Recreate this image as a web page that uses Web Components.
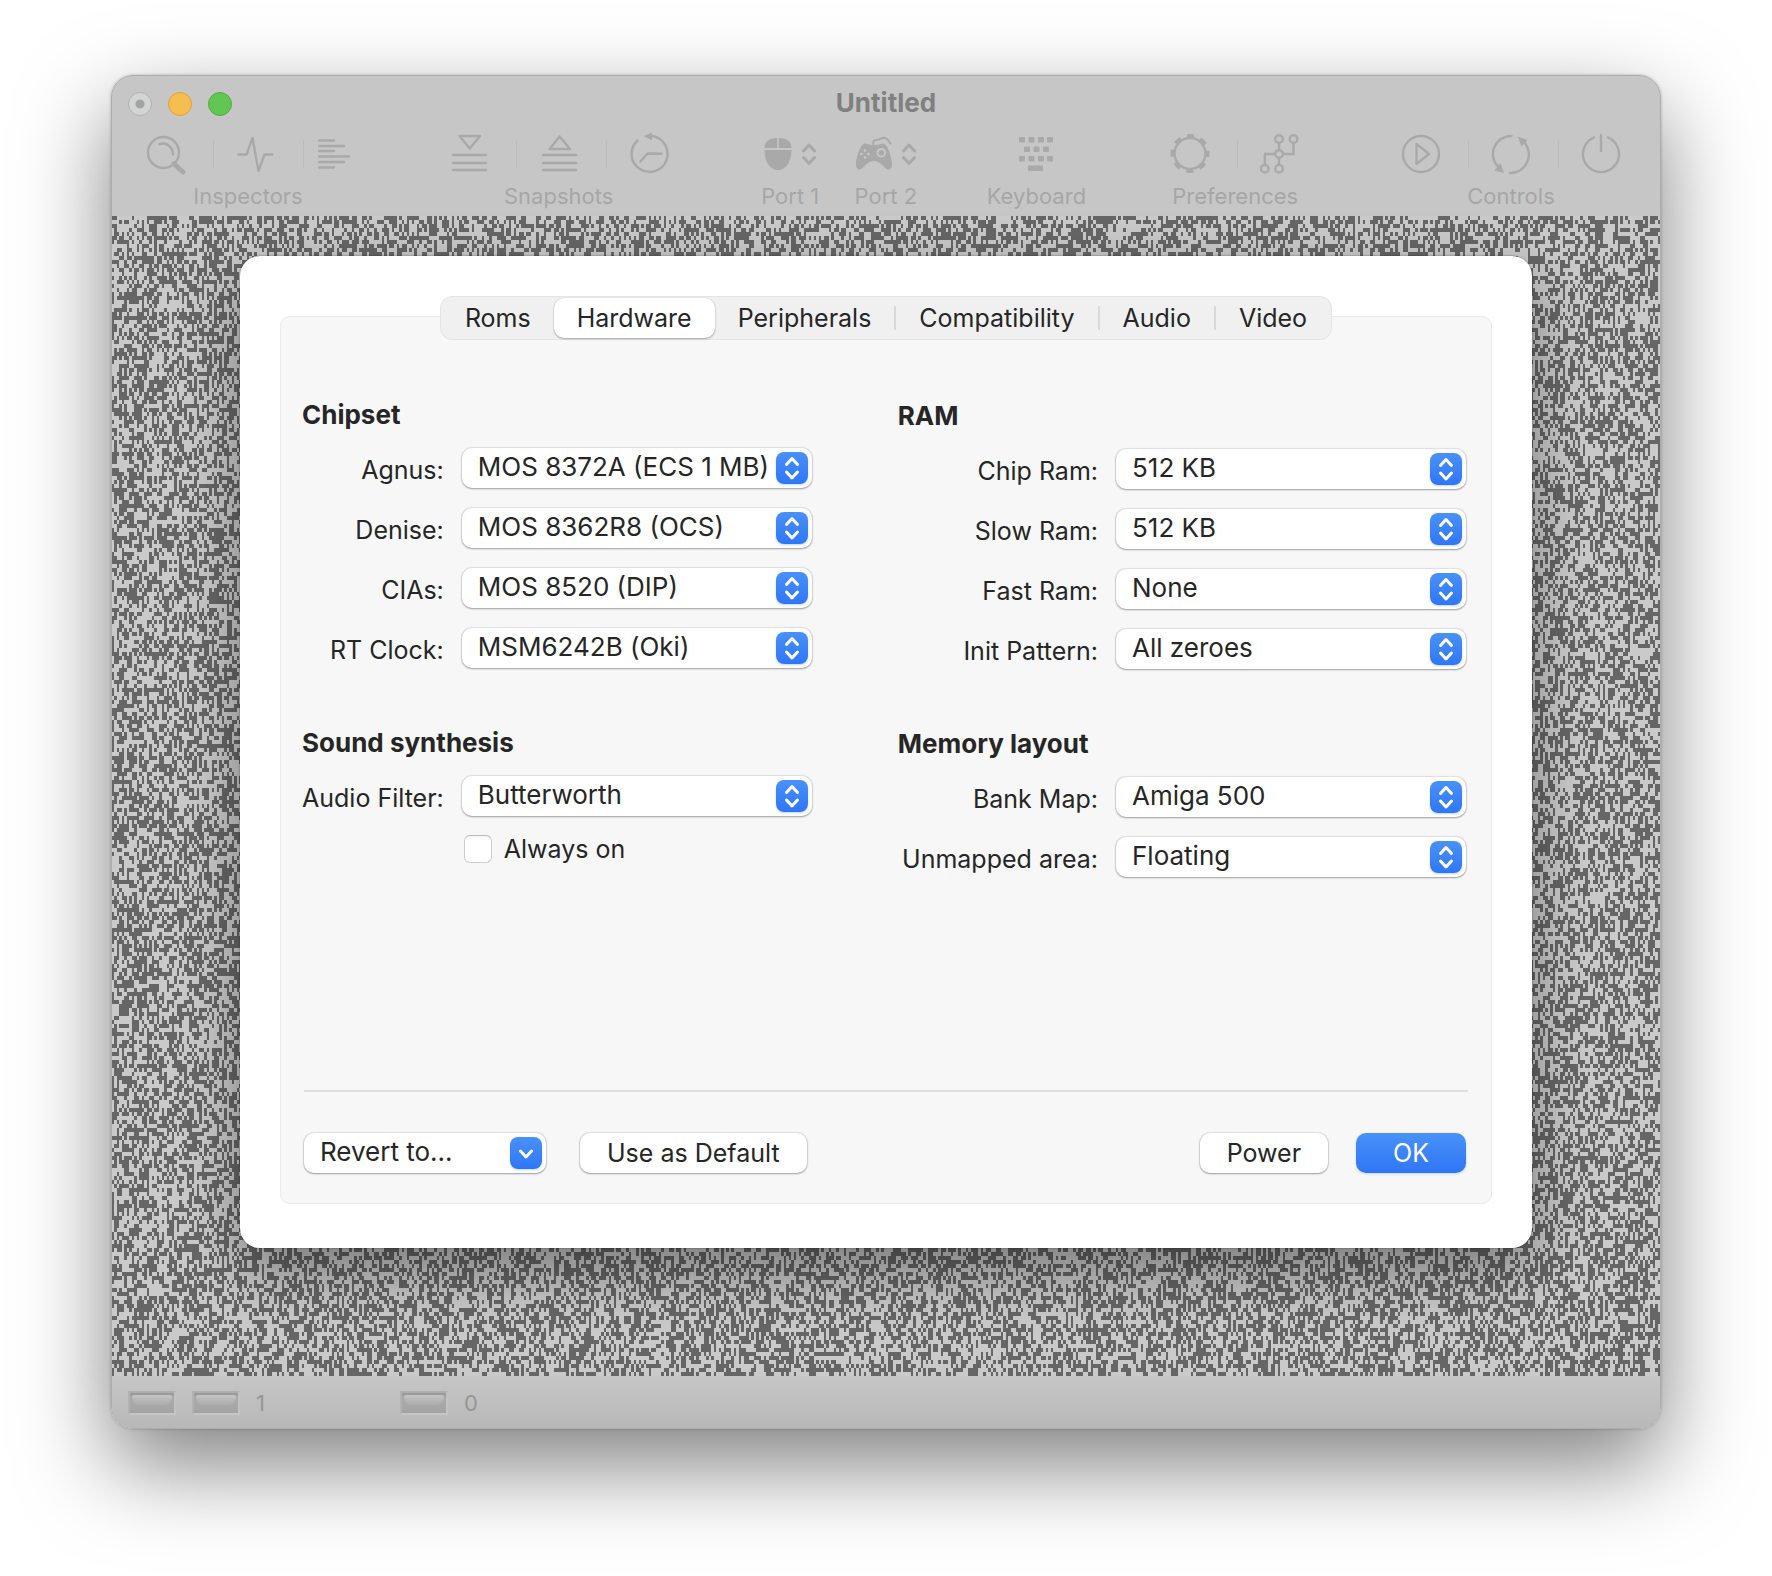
<!DOCTYPE html>
<html lang="en">
<head>
<meta charset="utf-8">
<title>Untitled</title>
<style>
  body { margin: 0; background: #fff; font-family: Inter, "Liberation Sans", sans-serif; font-size: 25px; line-height: 30px; color: #262626; }
</style>
</head>
<body>
<emulator-window heading="Untitled">
  <tool-group slot="tools" label="Inspectors">
    <tool-icon name="magnifier"></tool-icon><tool-divider></tool-divider>
    <tool-icon name="pulse"></tool-icon><tool-divider tight></tool-divider>
    <tool-icon name="list"></tool-icon>
  </tool-group>
  <tool-space slot="tools" style="flex-grow:95"></tool-space>
  <tool-group slot="tools" label="Snapshots">
    <tool-icon name="load"></tool-icon><tool-divider></tool-divider>
    <tool-icon name="save"></tool-icon><tool-divider></tool-divider>
    <tool-icon name="history"></tool-icon>
  </tool-group>
  <tool-space slot="tools" style="flex-grow:89"></tool-space>
  <tool-group slot="tools" label="Port 1" class="port">
    <tool-icon name="mouse"></tool-icon><tool-icon name="updown"></tool-icon>
  </tool-group>
  <tool-space slot="tools" style="flex-grow:34"></tool-space>
  <tool-group slot="tools" label="Port 2" class="port">
    <tool-icon name="gamepad"></tool-icon><tool-icon name="updown"></tool-icon>
  </tool-group>
  <tool-space slot="tools" style="flex-grow:67"></tool-space>
  <tool-group slot="tools" label="Keyboard">
    <tool-icon name="keyboard"></tool-icon>
  </tool-group>
  <tool-space slot="tools" style="flex-grow:81"></tool-space>
  <tool-group slot="tools" label="Preferences">
    <tool-icon name="gear"></tool-icon><tool-divider></tool-divider>
    <tool-icon name="network"></tool-icon>
  </tool-group>
  <tool-space slot="tools" style="flex-grow:97"></tool-space>
  <tool-group slot="tools" label="Controls">
    <tool-icon name="play"></tool-icon><tool-divider></tool-divider>
    <tool-icon name="cycle"></tool-icon><tool-divider></tool-divider>
    <tool-icon name="power"></tool-icon>
  </tool-group>

  <config-sheet>
    <tab-strip slot="tabs" tabs="Roms,Hardware,Peripherals,Compatibility,Audio,Video" selected="Hardware"></tab-strip>
    <form-section slot="left" heading="Chipset">
      <popup-row label="Agnus:" value="MOS 8372A (ECS 1 MB)"></popup-row>
      <popup-row label="Denise:" value="MOS 8362R8 (OCS)"></popup-row>
      <popup-row label="CIAs:" value="MOS 8520 (DIP)"></popup-row>
      <popup-row label="RT Clock:" value="MSM6242B (Oki)"></popup-row>
    </form-section>
    <form-section slot="left" heading="Sound synthesis">
      <popup-row label="Audio Filter:" value="Butterworth"></popup-row>
      <check-row label="Always on"></check-row>
    </form-section>
    <form-section slot="right" heading="RAM">
      <popup-row label="Chip Ram:" value="512 KB"></popup-row>
      <popup-row label="Slow Ram:" value="512 KB"></popup-row>
      <popup-row label="Fast Ram:" value="None"></popup-row>
      <popup-row label="Init Pattern:" value="All zeroes"></popup-row>
    </form-section>
    <form-section slot="right" heading="Memory layout">
      <popup-row label="Bank Map:" value="Amiga 500"></popup-row>
      <popup-row label="Unmapped area:" value="Floating"></popup-row>
    </form-section>
    <popup-button slot="actions" value="Revert to..." kind="down"></popup-button>
    <push-button slot="actions" class="default">Use as Default</push-button>
    <push-button slot="actions" class="power">Power</push-button>
    <push-button slot="actions" class="ok" primary>OK</push-button>
  </config-sheet>

  <drive-led slot="status"></drive-led>
  <drive-led slot="status" count="1"></drive-led>
  <drive-led slot="status" count="0"></drive-led>
</emulator-window>

<script>
const define = (name, html, init) => customElements.define(name, class extends HTMLElement {
  connectedCallback() {
    if (this.shadowRoot) return;
    const root = this.attachShadow({ mode: 'open' });
    root.innerHTML = typeof html === 'function' ? html(this) : html;
    if (init) init(root, this);
  }
});

/* Toolbar glyphs: [width, markup], all 44px tall */
const glyphs = {
  magnifier: [40, '<circle cx="17.5" cy="20.5" r="15.5"/><path d="M13.5 12C21 10 27 15 27 22.5"/><path d="M28 32L37 40" stroke-width="5"/><path d="M27 31L30 34"/>'],
  pulse: [40, '<path d="M2.500 22.500H10.500L16.500 6L22.500 39L28.500 22.500H36.500"/>'],
  list: [32, '<path d="M1 8.500H16M1 14H26M1 19H16M1 24.500H31M1 30H26M1 35.500H16"/>'],
  load: [40, '<path d="M10.500 4H31L20.700 16.500ZM4 23H37M4 31H37M4 38H37"/>'],
  save: [40, '<path d="M10.500 17H31L20.700 4.500ZM4 23H37M4 31H37M4 38H37"/>'],
  history: [40, '<path d="M23 4A18 18 0 1 1 8.500 8.500"/><path d="M11.500 29.500L18.500 21.500L32.500 21.800"/><path d="M14.500 4L23 0.500V8.500Z" fill="currentColor" stroke="none"/>'],
  mouse: [28, '<g fill="currentColor" stroke="none"><path d="M13.200 6V16H0.500C0.500 9 6 6 13.200 6ZM14.800 6V16H27.500C27.500 9 22 6 14.800 6ZM0.500 18H27.500C27.500 30 22 38 14 38S0.500 30 0.500 18Z"/></g>'],
  updown: [14, '<path d="M1.500 19L7 13L12.500 19M1.500 25.500L7 31.500L12.500 25.500" stroke-width="3"/>'],
  gamepad: [36, '<path d="M17.500 13C16.500 8.500 18 8.500 21 8C25 7.500 25 5.800 28 5.800C31 5.800 33 9 34.500 11.500" stroke-width="2"/><path fill="currentColor" stroke="none" d="M9 11.500C11 11.500 12 13 18 13S25 11.500 27 11.500C32 11.500 36 27 36 32C36 38 32 38.500 30 36.500C26 33 23 29 18 29S10 33 6 36.500C4 38.500 0 38 0 32C0 27 4 11.500 9 11.500Z"/><circle cx="25.300" cy="20.700" r="3.800" stroke="#c6c6c6" stroke-width="2"/><g fill="#c6c6c6" stroke="none"><circle cx="9" cy="18.500" r="1.300"/><circle cx="9" cy="25.500" r="1.300"/><circle cx="5.500" cy="22" r="1.300"/><circle cx="12.500" cy="22" r="1.300"/></g>'],
  keyboard: [34, '<g fill="currentColor" stroke="none">' +
    [[0,5],[9.500,5],[19,5],[28,5],[5,14.500],[14.500,14.500],[24,14.500],[0,24],[9.500,24],[19,24],[28,24]].map(p => `<rect x="${p[0]}" y="${p[1]}" width="6" height="5.500" rx="1"/>`).join('') +
    '<rect x="9" y="33.500" width="15" height="5.500" rx="1"/></g>'],
  gear: [40, '<circle cx="20" cy="21.500" r="15.500"/><circle cx="20" cy="21.500" r="17.500" stroke-width="4" stroke-linecap="butt" stroke-dasharray="7 6.744" stroke-dashoffset="3.500"/>'],
  network: [40, '<circle cx="19" cy="7" r="3.800"/><circle cx="33.500" cy="7" r="3.800"/><circle cx="19" cy="22" r="3.800"/><circle cx="4.800" cy="36.700" r="3.800"/><circle cx="19" cy="36.700" r="3.800"/><path stroke-linecap="butt" d="M19 11V18M33.500 11V22H23M15 22H4.800V33M19 26V33"/>'],
  play: [40, '<circle cx="20" cy="22" r="18"/><path d="M15.500 12L28 22L15.500 32Z"/>'],
  cycle: [40, '<path d="M20.500 4A18 18 0 0 0 8 35.500M19 41A18.500 18.500 0 0 0 33 10"/><path fill="currentColor" stroke="none" d="M13 41L3.500 38.500L9.500 31ZM26.500 4.500L36.500 8L30.500 14.500Z"/>'],
  power: [40, '<path d="M13 5.500A18 18 0 1 0 27 5.500M20 3V19"/>']
};

define('tool-icon', el => {
  const [w, body] = glyphs[el.getAttribute('name')];
  return `<style>
    :host { display: block; height: 44px; }
    button { display: block; padding: 0; border: 0; background: none; color: #a9a9a9; }
    svg { display: block; fill: none; stroke: currentColor; stroke-width: 2.4; stroke-linecap: round; stroke-linejoin: round; }
  </style><button type="button" aria-label="${el.getAttribute('name')}"><svg width="${w}" height="44" viewBox="0 0 ${w} 44">${body}</svg></button>`;
});

define('tool-divider', `<style>
  :host { display: block; width: 1px; height: 28px; margin: 0 22px 0 27px; background: #bcbcbc; }
  :host([tight]) { margin-right: 14px; }
</style>`);

define('tool-space', `<style>:host { display: block; flex: 1 1 0; }</style>`);

define('tool-group', el => `<style>
  :host { display: flex; flex-direction: column; align-items: center; gap: 8px; color: #a6a6a6; font-size: 22px; line-height: 24px; white-space: nowrap; }
  .icons { display: flex; align-items: center; }
  :host(.port) .icons { gap: 10px; }
</style><div class="icons"><slot></slot></div><span>${el.getAttribute('label')}</span>`);

define('drive-led', el => `<style>
  :host { display: flex; align-items: center; width: 64px; }
  :host([count]) { width: 208px; }
  .led { box-sizing: border-box; width: 48px; height: 24px; padding: 2px; border: 2px solid; border-color: #aeaeae #c2c2c2 #c6c6c6 #b2b2b2; background: linear-gradient(#989898, #ababab 30%, #a3a3a3); }
  .led::before { content: ""; display: block; height: 10px; border-radius: 2px 2px 8px 8px; background: linear-gradient(#c4c4c4, #acacac); }
  span { margin-left: 16px; font-size: 22px; line-height: 26px; color: #969696; }
</style><div class="led"></div>${el.hasAttribute('count') ? `<span>${el.getAttribute('count')}</span>` : ''}`);

define('emulator-window', el => `<style>
  :host { display: block; padding: 75px 111px 147px; }
  .window { border: 1px solid #adadad; border-radius: 22px; overflow: hidden; background: #c6c6c6; }
  .frame { border-radius: 22px; box-shadow: 0 36px 90px rgba(0,0,0,.5), 0 0 3px rgba(0,0,0,.25); }
  .title { display: grid; grid-template-columns: 1fr auto 1fr; align-items: center; height: 56px; padding: 0 16px; }
  .lights { display: flex; gap: 16px; }
  .lights button { box-sizing: border-box; width: 24px; height: 24px; padding: 0; border: 1px solid #b0b2b1; border-radius: 50%; background: radial-gradient(circle, #a2a4a3 0 4px, #d3d5d4 5px); }
  .lights .min { border-color: #dfa140; background: #f6be4f; }
  .lights .zoom { border-color: #53a93f; background: #62c655; }
  h1 { margin: 0; padding-bottom: 2px; font-size: 26px; line-height: 30px; font-weight: 700; color: #808080; }
  .tools { display: flex; padding: 0 39px 8px 34px; }
  .stage { position: relative; padding: 40px 128px 128px; }
  canvas { position: absolute; inset: 0; width: 100%; height: 100%; image-rendering: pixelated; }
  .status { display: flex; align-items: center; height: 50px; padding: 2px 16px 0; background: linear-gradient(#c6c6c6, #b8b8b8); }
</style>
<div class="frame"><div class="window">
  <header>
    <div class="title">
      <div class="lights"><button type="button" aria-label="Close"></button><button type="button" class="min" aria-label="Minimize"></button><button type="button" class="zoom" aria-label="Zoom"></button></div>
      <h1>${el.getAttribute('heading')}</h1>
    </div>
    <div class="tools"><slot name="tools"></slot></div>
  </header>
  <main class="stage"><canvas></canvas><slot></slot></main>
  <footer class="status"><slot name="status"></slot></footer>
</div></div>`, root => {
  /* Video static in two greys; cells are 2.5px wide and 4px tall */
  const canvas = root.querySelector('canvas');
  const w = canvas.width = Math.ceil(canvas.clientWidth / 2.5);
  const h = canvas.height = 290;
  const ctx = canvas.getContext('2d');
  const img = ctx.createImageData(w, h);
  let seed = 8372;
  for (let i = 0; i < w * h; i++) {
    seed ^= seed << 13; seed ^= seed >>> 17; seed ^= seed << 5;
    const v = (seed >>> 9) & 1 ? 0xca : 0x66;
    img.data.set([v, v, v, 255], i * 4);
  }
  ctx.putImageData(img, 0, 0);
});

define('config-sheet', `<style>
  :host { display: block; position: relative; padding: 40px; padding-bottom: 44px; border-radius: 20px; background: #fff; box-shadow: 0 24px 60px rgba(0,0,0,.4), 0 0 2px rgba(0,0,0,.5); }
  .tabs { position: relative; display: flex; justify-content: center; margin-bottom: -24px; }
  .panel { padding-bottom: 30px; border: 1px solid #e9e9e9; border-radius: 10px; background: #f7f7f7; }
  .columns { display: grid; grid-template-columns: 509fr 568fr; gap: 86px; padding: 83px 25px 213px 21px; }
  .col { display: flex; flex-direction: column; gap: 60px; }
  .right { padding-top: 1px; }
  .actions { display: flex; align-items: center; margin: 0 23px; padding: 41px 2px 0 0; border-top: 2px solid #dedede; }
  ::slotted(.default) { margin-left: 34px; }
  ::slotted(.power) { margin-left: auto; }
  ::slotted(.ok) { margin-left: 28px; }
</style>
<div class="tabs"><slot name="tabs"></slot></div>
<div class="panel">
  <div class="columns">
    <div class="col"><slot name="left"></slot></div>
    <div class="col right"><slot name="right"></slot></div>
  </div>
  <div class="actions"><slot name="actions"></slot></div>
</div>`);

define('tab-strip', el => {
  const sel = el.getAttribute('selected');
  return `<style>
    :host { display: flex; box-sizing: border-box; height: 44px; padding: 1px; border: 1px solid #e4e4e4; border-radius: 12px; background: #f0f0f0; }
    button { padding: 0 23px; border: 0; border-radius: 10px; background: none; font: inherit; color: inherit; }
    button[aria-selected=true] { background: #fff; box-shadow: 0 1px 2px rgba(0,0,0,.3), 0 0 1px rgba(0,0,0,.2); }
    i { width: 2px; height: 24px; margin: 8px 0; background: #dadada; }
  </style>` + el.getAttribute('tabs').split(',').map((t, n) =>
    (n > 2 ? '<i></i>' : '') + `<button type="button" role="tab" aria-selected="${t === sel}">${t}</button>`).join('');
});

define('form-section', el => `<style>
  :host { display: flex; flex-direction: column; gap: 18px; }
  h2 { margin: 0; font-size: 26px; line-height: 30px; font-weight: 700; }
  .rows { display: flex; flex-direction: column; gap: 20px; }
</style><h2>${el.getAttribute('heading')}</h2><div class="rows"><slot></slot></div>`);

/* Popup field shared by the labelled rows and the Revert button */
const popupStyle = `
  .popup { display: grid; grid-template-columns: 1fr 36px; align-items: center; height: 40px; }
  select { grid-area: 1 / 1 / 2 / 3; width: 100%; height: 40px; padding: 0 36px 2px 16px; border: 0; border-radius: 10px; appearance: none; background: #fff; font: inherit; font-size: 26px; color: inherit; box-shadow: 0 0 1px 1px rgba(0,0,0,.09), 0 1px 2px rgba(0,0,0,.3); }
  svg { grid-area: 1 / 2; width: 32px; height: 32px; border-radius: 8px; background: linear-gradient(#4991f8, #2f76f7); box-shadow: 0 1px 2px rgba(47,118,247,.3); pointer-events: none; fill: none; stroke: #fff; stroke-width: 3; stroke-linecap: round; stroke-linejoin: round; }`;
const popup = (value, kind) => `<div class="popup"><select id="field" aria-label="${value}"><option>${value}</option></select>
  <svg viewBox="0 0 32 32"><path d="${kind === 'down' ? 'M10.500 14L16 20L21.500 14' : 'M10.500 12.500L16 6.500L21.500 12.500M10.500 20L16 26L21.500 20'}"/></svg></div>`;

define('popup-row', el => `<style>${popupStyle}
  :host { display: grid; grid-template-columns: 1fr 350px; gap: 18px; align-items: center; }
  label { padding-top: 4px; text-align: right; white-space: nowrap; }
</style><label for="field">${el.getAttribute('label')}</label>${popup(el.getAttribute('value'))}`);

define('popup-button', el => `<style>${popupStyle}
  :host { display: block; width: 242px; }
</style>${popup(el.getAttribute('value'), el.getAttribute('kind'))}`);

define('check-row', el => `<style>
  :host { display: grid; grid-template-columns: 1fr 350px; gap: 18px; }
  div { grid-column: 2; display: flex; align-items: center; gap: 12px; height: 26px; padding-left: 2px; }
  input { appearance: none; box-sizing: border-box; width: 28px; height: 28px; margin: 0; border: 1px solid #cdcdcd; border-top-color: #b9b9b9; border-radius: 6px; background: linear-gradient(#f6f6f6, #fff 5px); }
</style><div><input type="checkbox" id="check"><label for="check">${el.getAttribute('label')}</label></div>`);

define('push-button', `<style>
  :host { display: block; }
  button { display: block; height: 40px; padding: 0 27px; border: 0; border-radius: 10px; background: #fff; font: inherit; color: inherit; box-shadow: 0 0 1px 1px rgba(0,0,0,.09), 0 1px 2px rgba(0,0,0,.3); }
  :host([primary]) button { padding: 0 37px; background: linear-gradient(#4991f8, #2f76f7); color: #fff; box-shadow: 0 1px 3px rgba(47,118,247,.25); }
</style><button type="button"><slot></slot></button>`);
</script>
</body>
</html>
